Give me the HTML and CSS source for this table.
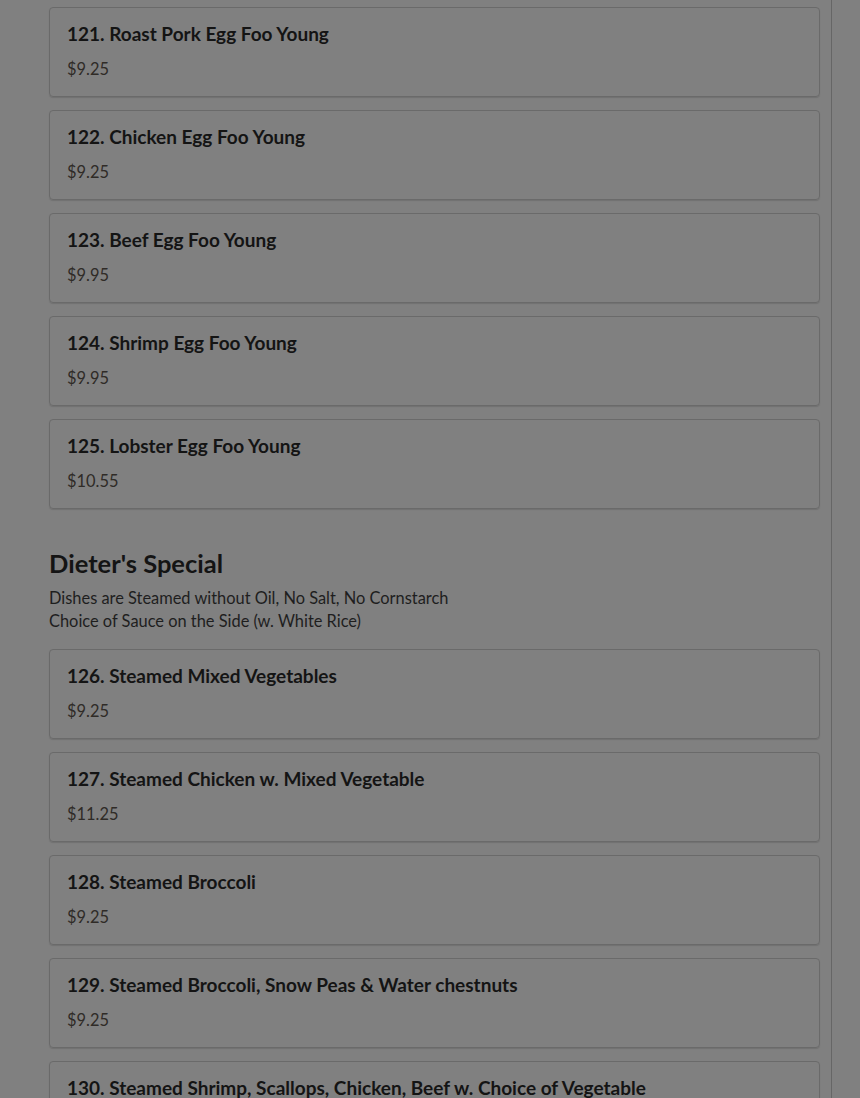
FILE: index.html
```html
<!DOCTYPE html>
<html lang="en">
<head>
<meta charset="utf-8">
<title>Menu</title>
<link rel="stylesheet" href="styles.css">
</head>
<body>
<main class="menu">
  <section class="section">
    <div class="items">
      <div class="item"><div class="item-name">121. Roast Pork Egg Foo Young</div><div class="item-price">$9.25</div></div>
      <div class="item"><div class="item-name">122. Chicken Egg Foo Young</div><div class="item-price">$9.25</div></div>
      <div class="item"><div class="item-name">123. Beef Egg Foo Young</div><div class="item-price">$9.95</div></div>
      <div class="item"><div class="item-name">124. Shrimp Egg Foo Young</div><div class="item-price">$9.95</div></div>
      <div class="item"><div class="item-name">125. Lobster Egg Foo Young</div><div class="item-price">$10.55</div></div>
    </div>
  </section>
  <section class="section">
    <h2 class="section-title">Dieter's Special</h2>
    <p class="section-desc">Dishes are Steamed without Oil, No Salt, No Cornstarch<br>Choice of Sauce on the Side (w. White Rice)</p>
    <div class="items">
      <div class="item"><div class="item-name">126. Steamed Mixed Vegetables</div><div class="item-price">$9.25</div></div>
      <div class="item"><div class="item-name">127. Steamed Chicken w. Mixed Vegetable</div><div class="item-price">$11.25</div></div>
      <div class="item"><div class="item-name">128. Steamed Broccoli</div><div class="item-price">$9.25</div></div>
      <div class="item"><div class="item-name">129. Steamed Broccoli, Snow Peas &amp; Water chestnuts</div><div class="item-price">$9.25</div></div>
      <div class="item"><div class="item-name">130. Steamed Shrimp, Scallops, Chicken, Beef w. Choice of Vegetable</div><div class="item-price">$12.95</div></div>
    </div>
  </section>
</main>
</body>
</html>
```

FILE: styles.css
```css
html, body {
  margin: 0;
  padding: 0;
  background: #808080;
  height: 1098px;
  overflow: hidden;
}

body {
  font-family: "Lato", "Open Sans", "Liberation Sans", sans-serif;
  color: #141414;
}

.menu {
  width: 771px;
  padding: 7px 11px 0 49px;
  border-right: 1px solid #666;
  min-height: 1098px;
  box-sizing: content-box;
}

.items {
  display: flex;
  flex-direction: column;
  gap: 13px;
}

.item {
  border: 1px solid #6a6a6a;
  border-radius: 4px;
  padding: 12px 16px 15px 17px;
  box-shadow: 0 1px 1px rgba(0, 0, 0, 0.12);
  display: flex;
  flex-direction: column;
  gap: 10px;
}

.item-name {
  font-size: 19px;
  font-weight: 700;
  line-height: 27px;
  color: #141414;
}

.item-price {
  font-size: 16.4px;
  line-height: 24px;
  color: #2f2b27;
}

.section + .section {
  margin-top: 40px;
}

.section-title {
  margin: 0;
  font-size: 25.5px;
  font-weight: 700;
  line-height: 29px;
  color: #141414;
}

.section-desc {
  margin: 8px 0 17px;
  font-size: 16.4px;
  line-height: 23px;
  color: #1e1e1e;
}
```
